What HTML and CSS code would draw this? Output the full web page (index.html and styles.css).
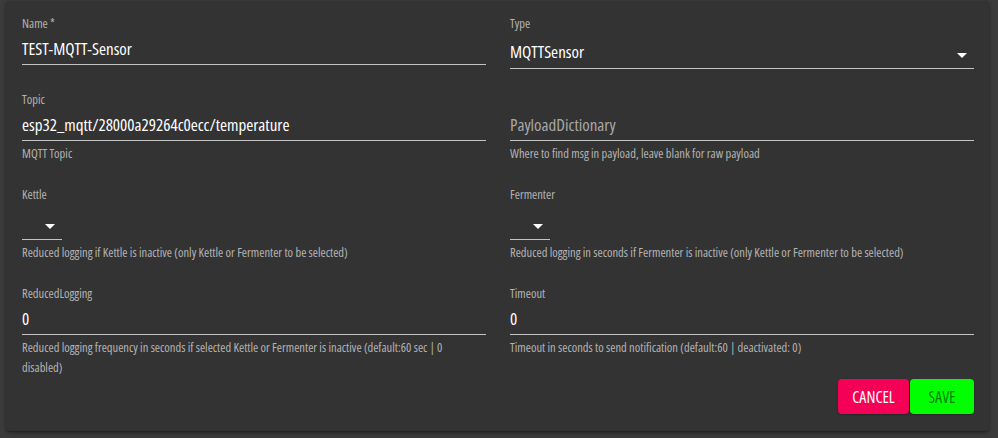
FILE: index.html
```html
<!DOCTYPE html>
<html>
<head>
<meta charset="utf-8">
<link rel="stylesheet" href="styles.css">
</head>
<body>
<div class="paper">
  <div class="grid">
    <div class="field">
      <div class="label">Name *</div>
      <div class="input">TEST-MQTT-Sensor</div>
    </div>
    <div class="field">
      <div class="label">Type</div>
      <div class="input select"><span>MQTTSensor</span><span class="arrow"></span></div>
    </div>

    <div class="field">
      <div class="label">Topic</div>
      <div class="input">esp32_mqtt/28000a29264c0ecc/temperature</div>
      <div class="helper">MQTT Topic</div>
    </div>
    <div class="field">
      <div class="label"></div>
      <div class="input placeholder">PayloadDictionary</div>
      <div class="helper">Where to find msg in payload, leave blank for raw payload</div>
    </div>

    <div class="field">
      <div class="label">Kettle</div>
      <div class="input select narrow"><span></span><span class="arrow"></span></div>
      <div class="helper">Reduced logging if Kettle is inactive (only Kettle or Fermenter to be selected)</div>
    </div>
    <div class="field">
      <div class="label">Fermenter</div>
      <div class="input select narrow"><span></span><span class="arrow"></span></div>
      <div class="helper">Reduced logging in seconds if Fermenter is inactive (only Kettle or Fermenter to be selected)</div>
    </div>

    <div class="field">
      <div class="label">ReducedLogging</div>
      <div class="input">0</div>
      <div class="helper">Reduced logging frequency in seconds if selected Kettle or Fermenter is inactive (default:60 sec | 0 disabled)</div>
    </div>
    <div class="field">
      <div class="label">Timeout</div>
      <div class="input">0</div>
      <div class="helper">Timeout in seconds to send notification (default:60 | deactivated: 0)</div>
    </div>
  </div>
  <div class="actions">
    <button class="btn cancel">Cancel</button>
    <button class="btn save">Save</button>
  </div>
</div>
</body>
</html>
```
FILE: styles.css
```css
html, body {
  margin: 0;
  padding: 0;
}
body {
  background: #3b3b3b;
  font-family: "Open Sans", "Roboto Condensed", sans-serif;
  font-stretch: condensed;
  color: #fff;
}
.paper {
  margin: 1px 9px 7px 6px;
  background: #333333;
  border-radius: 4px;
  box-shadow: 0 2px 4px rgba(0,0,0,0.3), 0 1px 2px rgba(0,0,0,0.2);
  padding: 17px 15px 17px 16px;
}
.grid {
  display: grid;
  grid-template-columns: 1fr 1fr;
  column-gap: 24px;
  row-gap: 25px;
}
.field {
  display: flex;
  flex-direction: column;
  align-items: flex-start;
}
.label {
  font-size: 12.5px;
  line-height: 12px;
  height: 12px;
  color: #b4b4b4;
}
.input {
  align-self: stretch;
  box-sizing: border-box;
  height: 35px;
  padding-top: 3px;
  line-height: 31px;
  font-size: 17px;
  color: #ffffff;
  border-bottom: 1px solid #c4c4c4;
  white-space: nowrap;
}
.placeholder {
  color: #a8a8a8;
}
.select {
  height: 39px;
  padding-top: 6px;
  line-height: 32px;
  display: flex;
  justify-content: space-between;
  align-items: center;
}
.select.narrow {
  align-self: flex-start;
  width: 40px;
}
.arrow {
  width: 0;
  height: 0;
  border-left: 5px solid transparent;
  border-right: 5px solid transparent;
  border-top: 5px solid #ffffff;
  margin-right: 7px;
  margin-top: 6px;
}
.helper {
  margin-top: 3px;
  max-width: 440px;
  font-size: 12.5px;
  line-height: 20px;
  color: #b4b4b4;
}
.actions {
  display: flex;
  justify-content: flex-end;
  gap: 1px;
  margin-top: 1px;
}
.btn {
  height: 35px;
  border: none;
  border-radius: 4px;
  font-family: "Open Sans", "Roboto Condensed", sans-serif;
  font-stretch: condensed;
  font-size: 16px;
  text-transform: uppercase;
  padding: 0;
  box-shadow: 0 1px 2px rgba(0,0,0,0.25);
}
.cancel {
  width: 71px;
  background: #f50057;
  color: #ffffff;
}
.save {
  width: 64px;
  background: #00ff00;
  color: rgba(0,0,0,0.55);
}
```
